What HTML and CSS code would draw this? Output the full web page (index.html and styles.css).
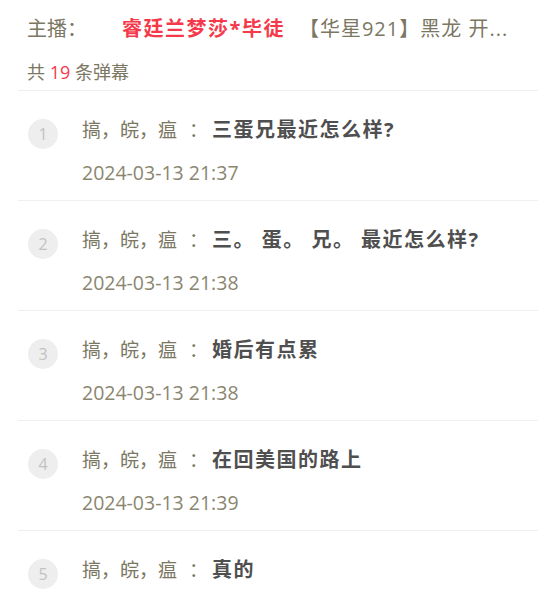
FILE: index.html
```html
<!DOCTYPE html>
<html lang="zh-CN">
<head>
  <meta charset="UTF-8" />
  <meta name="viewport" content="width=device-width, initial-scale=1.0"/>
  <title>弹幕列表</title>
  <link rel="stylesheet" href="styles.css">
</head>
<body>
  <div class="panel">
    <div class="header">
      <div class="anchor">
        <span class="anchor-label">主播：</span>
        <span class="anchor-name">睿廷兰梦莎*毕徒</span>
        <span class="anchor-title">【华星921】黑龙 开...</span>
      </div>
      <div class="count">共 <span class="num">19</span> 条弹幕</div>
    </div>

    <ul class="danmaku-list">
      <li class="item">
        <span class="index">1</span>
        <div class="body">
          <p class="line"><span class="user">搞，皖，瘟</span><span class="colon">：</span><span class="msg">三蛋兄最近怎么样?</span></p>
          <p class="time">2024-03-13 21:37</p>
        </div>
      </li>
      <li class="item">
        <span class="index">2</span>
        <div class="body">
          <p class="line"><span class="user">搞，皖，瘟</span><span class="colon">：</span><span class="msg">三。 蛋。 兄。 最近怎么样?</span></p>
          <p class="time">2024-03-13 21:38</p>
        </div>
      </li>
      <li class="item">
        <span class="index">3</span>
        <div class="body">
          <p class="line"><span class="user">搞，皖，瘟</span><span class="colon">：</span><span class="msg">婚后有点累</span></p>
          <p class="time">2024-03-13 21:38</p>
        </div>
      </li>
      <li class="item">
        <span class="index">4</span>
        <div class="body">
          <p class="line"><span class="user">搞，皖，瘟</span><span class="colon">：</span><span class="msg">在回美国的路上</span></p>
          <p class="time">2024-03-13 21:39</p>
        </div>
      </li>
      <li class="item">
        <span class="index">5</span>
        <div class="body">
          <p class="line"><span class="user">搞，皖，瘟</span><span class="colon">：</span><span class="msg">真的</span></p>
        </div>
      </li>
    </ul>
  </div>
</body>
</html>
```

FILE: styles.css
```css
body {
  margin: 0;
  padding: 0;
  background: #fff;
  font-family: "Open Sans", "Noto Sans CJK SC", sans-serif;
  color: #7b7763;
}
.panel {
  margin-left: 18px;
}
.header {
  padding: 12px 0 6px 9px;
  border-bottom: 1px solid #efefef;
}
.anchor {
  display: flex;
  align-items: center;
  height: 30px;
  font-size: 20px;
  white-space: nowrap;
}
.anchor-label {
  width: 95px;
  flex-shrink: 0;
}
.anchor-name {
  color: #f5394b;
  font-weight: bold;
  letter-spacing: 1.5px;
  margin-right: 14px;
}
.anchor-title {
  overflow: hidden;
  letter-spacing: 1px;
}
.count {
  margin-top: 18px;
  font-size: 18px;
  line-height: 24px;
}
.count .num {
  color: #f5394b;
}
.danmaku-list {
  list-style: none;
  margin: 0;
  padding: 0;
}
.item {
  display: flex;
  align-items: flex-start;
  height: 109px;
  padding-left: 10px;
  border-bottom: 1px solid #efefef;
}
.index {
  width: 30px;
  height: 30px;
  margin-top: 28px;
  margin-right: 24px;
  border-radius: 50%;
  background: #eeeeee;
  color: #c2c2c2;
  font-size: 16px;
  line-height: 30px;
  text-align: center;
  flex-shrink: 0;
}
.body {
  padding-top: 23px;
}
.line {
  margin: 0;
  font-size: 19px;
  line-height: 30px;
  white-space: nowrap;
}
.user {
  font-family: "Open Sans", "Noto Sans CJK TC", sans-serif;
}
.colon {
  font-family: "Noto Sans CJK TC", sans-serif;
  margin-left: 12px;
  margin-right: 4px;
}
.msg {
  color: #4f4f4f;
  font-size: 20px;
  font-weight: bold;
  letter-spacing: 1.5px;
}
.time {
  margin: 13px 0 0;
  font-size: 19.5px;
  line-height: 30px;
  color: #8a8670;
}
```
